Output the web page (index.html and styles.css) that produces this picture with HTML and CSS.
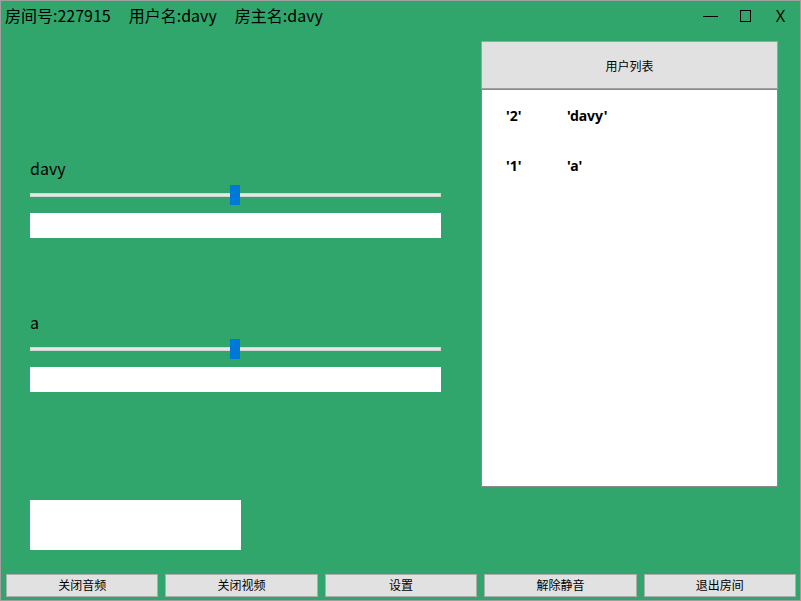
FILE: index.html
```html
<!DOCTYPE html>
<html>
<head>
<meta charset="utf-8">
<link rel="stylesheet" href="styles.css">
</head>
<body>
<div class="window">
  <div class="titlebar">
    <div class="info">
      <span>房间号:227915</span>
      <span>用户名:davy</span>
      <span>房主名:davy</span>
    </div>
    <div class="controls">
      <div class="ctl"><span class="min"></span></div>
      <div class="ctl"><span class="max"></span></div>
      <div class="ctl"><span class="close">X</span></div>
    </div>
  </div>
  <div class="main">
    <div class="left">
      <div class="group">
        <div class="label">davy</div>
        <div class="slider"><div class="track"></div><div class="thumb"></div></div>
        <div class="field"></div>
      </div>
      <div class="group second">
        <div class="label">a</div>
        <div class="slider"><div class="track"></div><div class="thumb"></div></div>
        <div class="field"></div>
      </div>
      <div class="video"></div>
    </div>
    <div class="panel">
      <div class="panel-head">用户列表</div>
      <div class="panel-body">
        <div class="row"><span class="id">'2'</span><span>'davy'</span></div>
        <div class="row"><span class="id">'1'</span><span>'a'</span></div>
      </div>
    </div>
  </div>
  <div class="buttons">
    <button class="btn">关闭音频</button>
    <button class="btn">关闭视频</button>
    <button class="btn">设置</button>
    <button class="btn">解除静音</button>
    <button class="btn">退出房间</button>
  </div>
  <div class="grip"></div>
</div>
</body>
</html>
```

FILE: styles.css
```css
* { box-sizing: border-box; }
html, body { margin: 0; padding: 0; }
body {
  width: 801px;
  height: 601px;
  overflow: hidden;
  font-family: "Noto Sans CJK SC", "Noto Sans", sans-serif;
  color: #000;
}
.window {
  position: relative;
  width: 801px;
  height: 601px;
  border: 1px solid #a0a0a0;
  background: #31a66c;
  display: flex;
  flex-direction: column;
}
.titlebar {
  height: 32px;
  display: flex;
  align-items: center;
  justify-content: space-between;
  padding: 0 2px 0 4px;
}
.info {
  display: flex;
  gap: 18px;
  font-size: 16px;
  line-height: 20px;
  margin-top: -4px;
}
.controls { display: flex; align-self: stretch; }
.ctl {
  width: 35px;
  display: flex;
  align-items: center;
  justify-content: center;
}
.min {
  display: block;
  width: 15px;
  height: 1px;
  background: #000;
  margin-top: -1px;
}
.max {
  display: block;
  width: 11px;
  height: 12px;
  border: 1px solid #000;
  margin-top: -2px;
}
.close {
  font-family: "Noto Sans", sans-serif;
  font-size: 16px;
  line-height: 18px;
  margin-top: -3px;
}
.main {
  flex: 1;
  display: flex;
  padding: 8px 0 0 29px;
}
.left {
  width: 411px;
  display: flex;
  flex-direction: column;
  padding-top: 117px;
}
.label {
  font-size: 16px;
  line-height: 20px;
  height: 21px;
}
.slider {
  position: relative;
  height: 20px;
  margin-top: 6px;
}
.track {
  position: absolute;
  left: 0;
  right: 0;
  top: 8px;
  height: 4px;
  background: #e7e7e7;
  border: 1px solid #d4d4d4;
}
.thumb {
  position: absolute;
  left: 200px;
  top: 0;
  width: 10px;
  height: 20px;
  background: #0078d7;
}
.field {
  height: 25px;
  background: #fff;
  margin-top: 8px;
}
.second { margin-top: 74px; }
.video {
  width: 211px;
  height: 50px;
  background: #fff;
  margin-top: 108px;
}
.panel {
  margin-left: 40px;
  width: 297px;
  display: flex;
  flex-direction: column;
  height: 446px;
}
.panel-head {
  height: 48px;
  background: #e1e1e1;
  border: 1px solid #a0a0a0;
  display: flex;
  align-items: center;
  justify-content: center;
  font-size: 12px;
}
.panel-body {
  flex: 1;
  background: #fff;
  border: 1px solid #8a8a8a;
  border-top: 1px solid #8a8a8a;
  padding: 0 0 0 24px;
}
.row {
  height: 50px;
  display: flex;
  align-items: center;
  font-family: "Noto Sans", sans-serif;
  font-weight: bold;
  font-size: 14px;
}
.row .id { width: 61px; }
.buttons {
  display: flex;
  gap: 7px;
  padding: 0 4px 3px 5px;
}
.btn {
  flex: 1;
  height: 23px;
  margin: 0;
  padding: 0 0 2px 0;
  background: #e1e1e1;
  border: 1px solid #adadad;
  font-family: "Noto Sans CJK SC", sans-serif;
  font-size: 12px;
  line-height: 18px;
  color: #000;
}
.grip {
  position: absolute;
  right: 0;
  bottom: 0;
  width: 6px;
  height: 6px;
  background-image: radial-gradient(#bdbdbd 40%, transparent 45%);
  background-size: 2px 2px;
}
```
